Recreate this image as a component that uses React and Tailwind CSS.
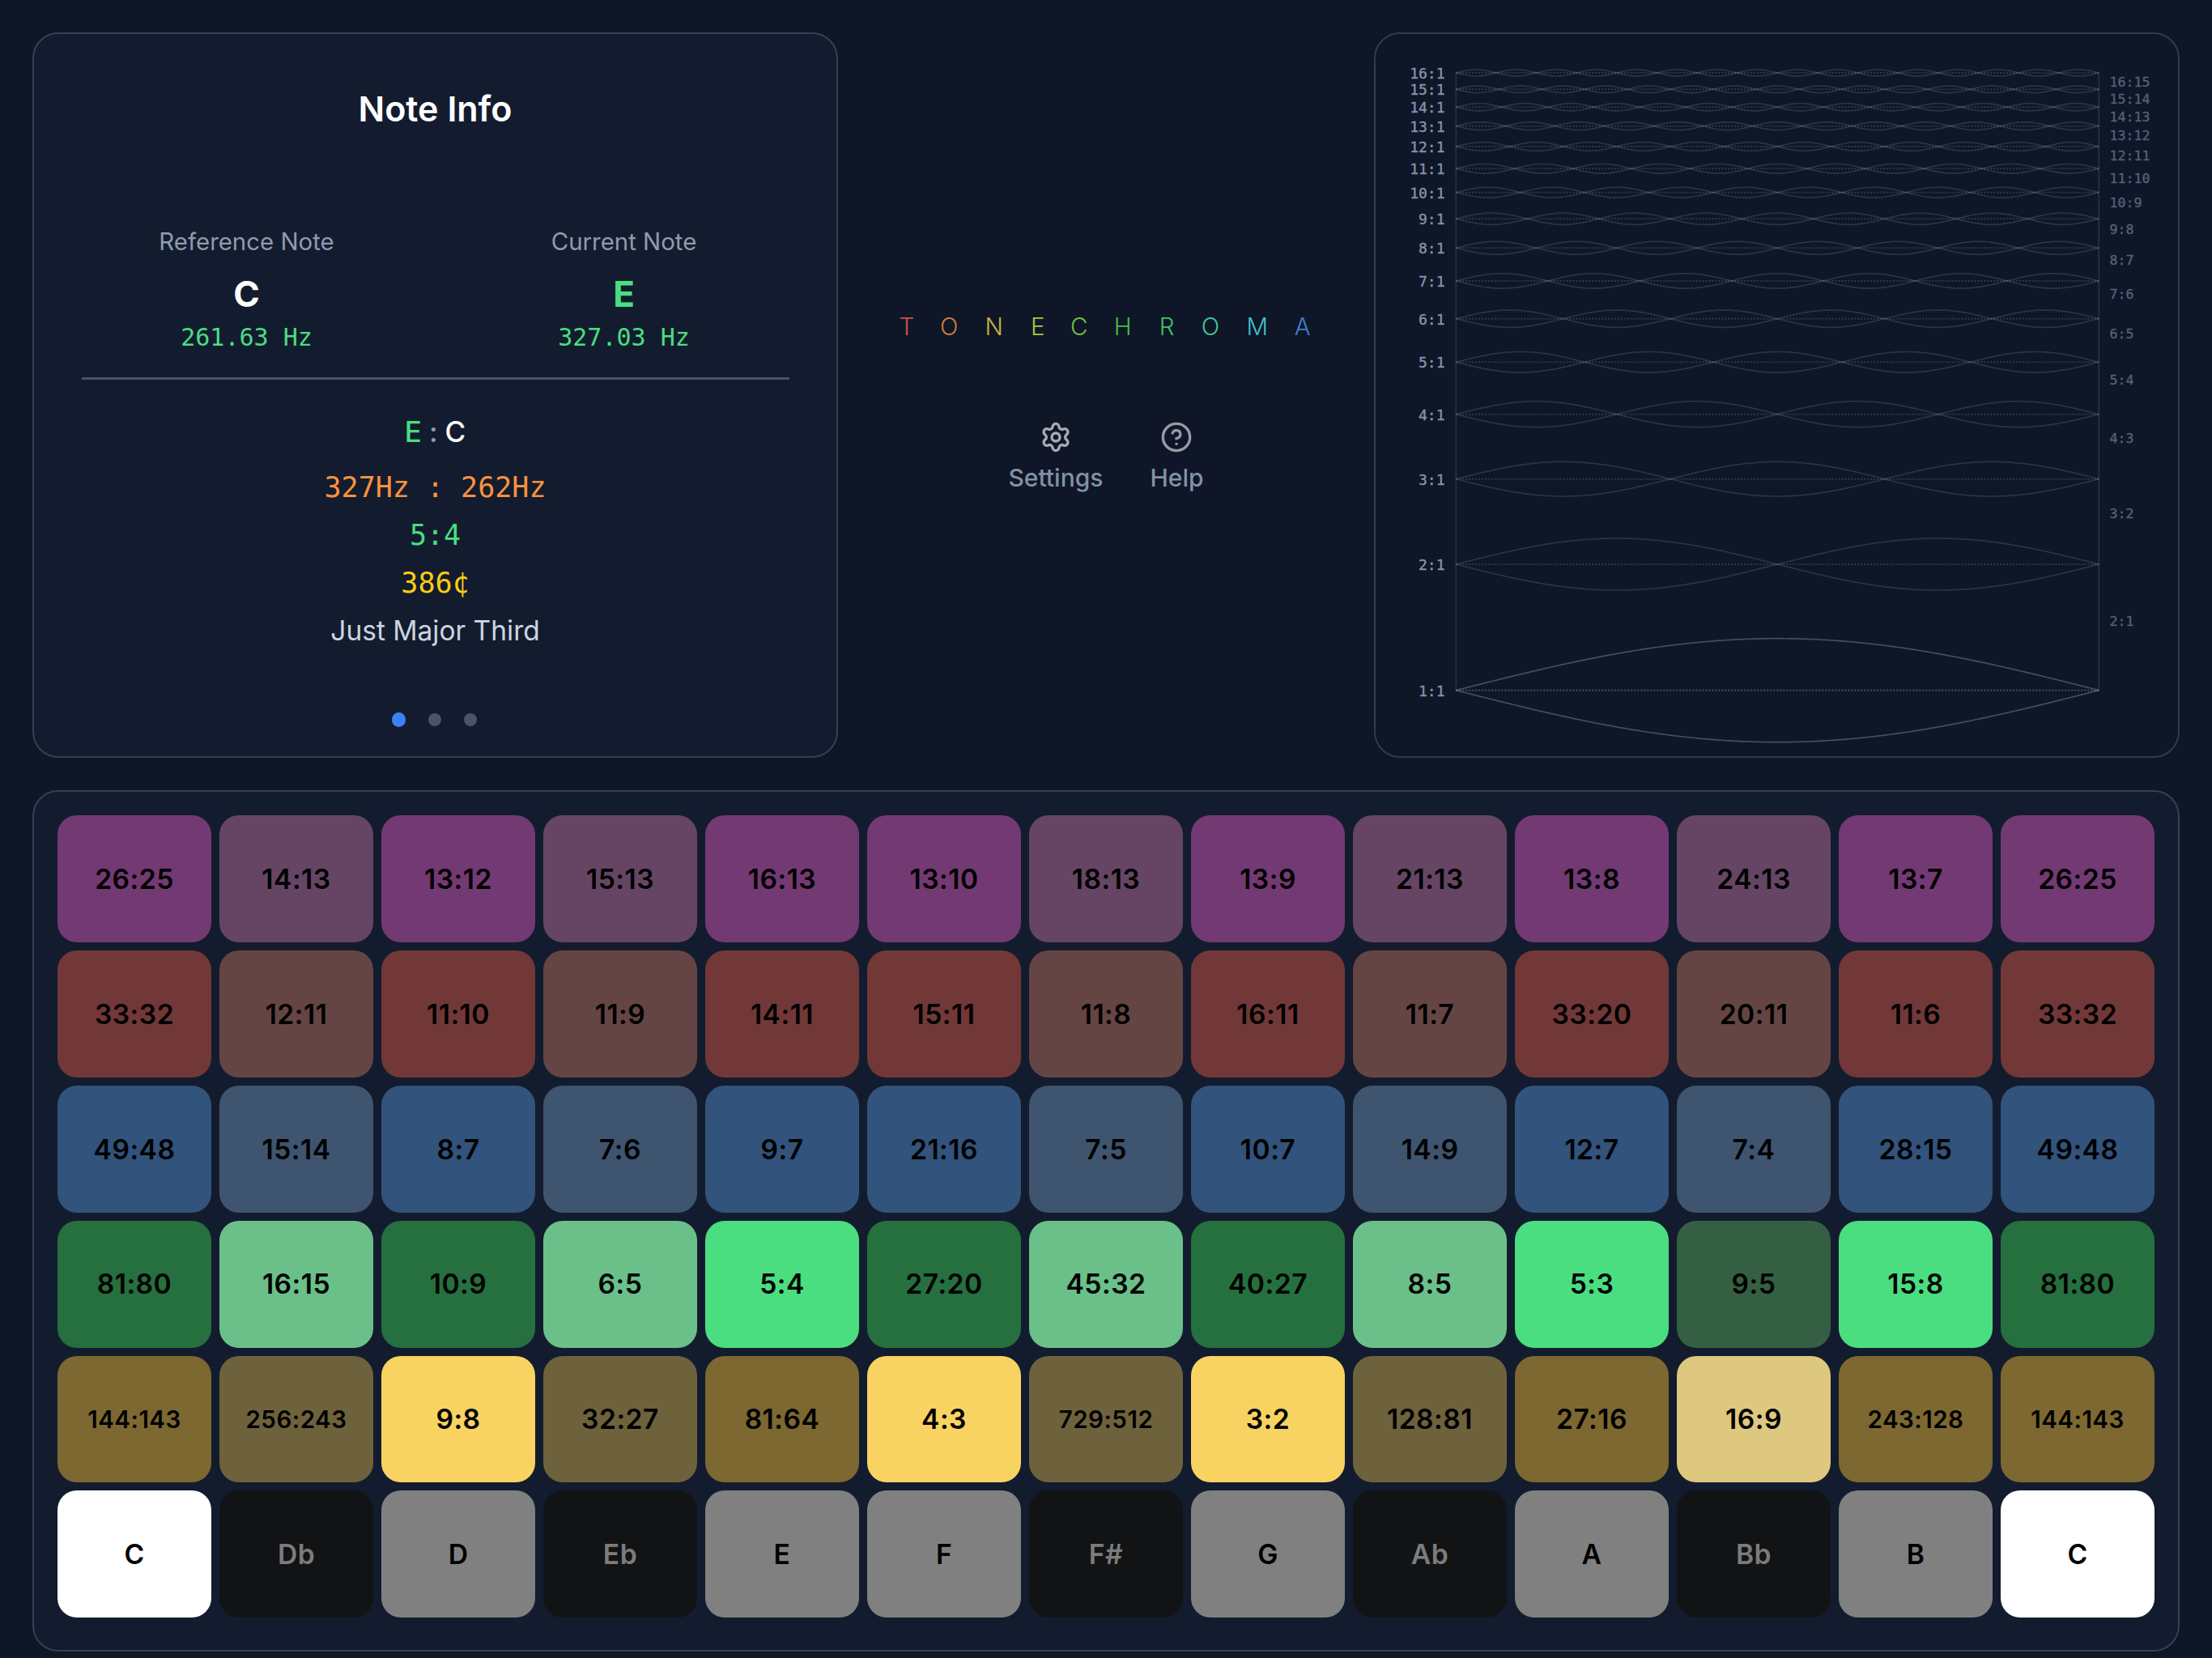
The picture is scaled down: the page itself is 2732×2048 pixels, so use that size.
import clsx from 'clsx'
import { CircleHelp, Settings } from 'lucide-react'

const LOGO = [
  ['T', 'w-[52px] text-[#cf5149]'],
  ['O', 'w-[52.8px] text-[#d07a42]'],
  ['N', 'w-[58.2px] text-[#d0b040]'],
  ['E', 'w-[49.8px] text-[#a9c63f]'],
  ['C', 'w-[52px] text-[#6cc23f]'],
  ['H', 'w-[55.8px] text-[#45bf45]'],
  ['R', 'w-[53px] text-[#43c463]'],
  ['O', 'w-[54.8px] text-[#43c495]'],
  ['M', 'w-[60.8px] text-[#44bfc8]'],
  ['A', 'w-[51px] text-[#437fcb]'],
]

// n: harmonic number, y: string position in the chart
const HARMONICS = [
  [1, 852.7], [2, 697], [3, 591.7], [4, 511.7], [5, 447.3], [6, 393.7], [7, 347], [8, 306.3],
  [9, 270.3], [10, 237.7], [11, 208.3], [12, 181], [13, 155.7], [14, 132.3], [15, 110.3], [16, 90],
]

const INTERVALS = [
  ['2:1', 773], ['3:2', 640.3], ['4:3', 546.7], ['5:4', 475.3], ['6:5', 417.7], ['7:6', 369],
  ['8:7', 326.7], ['9:8', 289.3], ['10:9', 255.7], ['11:10', 226], ['12:11', 198], ['13:12', 173],
  ['14:13', 149.7], ['15:14', 128.3], ['16:15', 107.3],
]

const BLACK_KEYS = [1, 3, 6, 8, 10]

const ROWS = [
  {
    notes: ['26:25', '14:13', '13:12', '15:13', '16:13', '13:10', '18:13', '13:9', '21:13', '13:8', '24:13', '13:7', '26:25'],
    active: [],
    white: 'bg-[#733973]', black: 'bg-[#664564]',
  },
  {
    notes: ['33:32', '12:11', '11:10', '11:9', '14:11', '15:11', '11:8', '16:11', '11:7', '33:20', '20:11', '11:6', '33:32'],
    active: [],
    white: 'bg-[#713837]', black: 'bg-[#654543]',
  },
  {
    notes: ['49:48', '15:14', '8:7', '7:6', '9:7', '21:16', '7:5', '10:7', '14:9', '12:7', '7:4', '28:15', '49:48'],
    active: [],
    white: 'bg-[#31537c]', black: 'bg-[#3f546e]',
  },
  {
    notes: ['81:80', '16:15', '10:9', '6:5', '5:4', '27:20', '45:32', '40:27', '8:5', '5:3', '9:5', '15:8', '81:80'],
    active: [1, 3, 4, 6, 8, 9, 11],
    white: 'bg-[#25703e]', black: 'bg-[#355f42]',
    whiteActive: 'bg-[#4ade80]', blackActive: 'bg-[#6bc08a]',
  },
  {
    notes: ['144:143', '256:243', '9:8', '32:27', '81:64', '4:3', '729:512', '3:2', '128:81', '27:16', '16:9', '243:128', '144:143'],
    active: [2, 5, 7, 10],
    white: 'bg-[#7c6830]', black: 'bg-[#6e623c]',
    whiteActive: 'bg-[#f8d362]', blackActive: 'bg-[#dec77e]',
  },
  {
    notes: ['C', 'Db', 'D', 'Eb', 'E', 'F', 'F#', 'G', 'Ab', 'A', 'Bb', 'B', 'C'],
    active: [0, 12],
    white: 'bg-[#808080]', black: 'bg-[#121315] text-[#7c7c7c]',
    whiteActive: 'bg-white',
  },
]

function cellColor(row, i) {
  const isBlack = BLACK_KEYS.includes(i)
  if (row.active.includes(i)) return isBlack ? row.blackActive : row.whiteActive
  return isBlack ? row.black : row.white
}

function NoteColumn({ label, note, freq, color }) {
  return (
    <div className="flex flex-col items-center">
      <span className="text-[29.4px] leading-10 text-[#8e9bb0]">{label}</span>
      <span className={clsx('mt-4 text-[44px] leading-[56px] font-bold', color)}>{note}</span>
      <span className="mt-1.5 font-['DejaVu_Sans_Mono',monospace] text-[30px] leading-10 text-[#4ade80]">{freq}</span>
    </div>
  )
}

function NoteInfo() {
  return (
    <section className="flex flex-col items-center rounded-[32px] border-2 border-[#334155] bg-[#131c2e] pt-[66px]">
      <h2 className="text-[43px] leading-[52px] font-semibold text-white">Note Info</h2>
      <div className="mt-[119px] grid w-[874px] grid-cols-2 gap-[58px] border-b-[3px] border-[#465467] pb-[29px]">
        <NoteColumn label="Reference Note" note="C" freq="261.63 Hz" color="text-white" />
        <NoteColumn label="Current Note" note="E" freq="327.03 Hz" color="text-[#4ade80]" />
      </div>
      <div className="mt-10 flex flex-col items-center gap-[11px] text-[35px] leading-[48px]">
        <div className="mb-2.5 flex gap-[9px] font-medium">
          <span className="text-[#4ade80]">E</span>
          <span className="text-[#8e9bb0]">:</span>
          <span className="text-white">C</span>
        </div>
        <p className="font-['DejaVu_Sans_Mono',monospace] text-[#fb923c]">327Hz : 262Hz</p>
        <p className="font-['DejaVu_Sans_Mono',monospace] text-[#4ade80]">5:4</p>
        <p className="font-['DejaVu_Sans_Mono',monospace] text-[#facc15]">386¢</p>
        <p className="text-[33.5px] text-[#cbd5e1]">Just Major Third</p>
      </div>
      <div className="mt-[77px] flex items-center gap-7 pr-0.5">
        <span className="size-[17.6px] rounded-full bg-[#3b82f6]" />
        <span className="size-4 rounded-full bg-[#475569]" />
        <span className="size-4 rounded-full bg-[#475569]" />
      </div>
    </section>
  )
}

function Menu() {
  return (
    <section className="flex flex-col items-center pt-[343px]">
      <h1 className="flex pr-1 text-center text-[29.5px] leading-10 font-[350]">
        {LOGO.map(([letter, cls], i) => <span key={i} className={cls}>{letter}</span>)}
      </h1>
      <div className="mt-[97px] flex gap-[58px] text-[30px] leading-9 font-medium text-[#8391a6]">
        <button className="flex flex-col items-center gap-3">
          <Settings size={40} className="text-[#a9abb1]" />
          Settings
        </button>
        <button className="flex flex-col items-center gap-3">
          <CircleHelp size={40} className="text-[#989ba3]" />
          Help
        </button>
      </div>
    </section>
  )
}

const LEFT = 1798.3
const WIDTH = 794

function wave(n, y, sign) {
  const steps = 480
  let d = ''
  for (let i = 0; i <= steps; i++) {
    const x = LEFT + (WIDTH * i) / steps
    const dy = sign * (64 / n) * Math.sin((Math.PI * n * i) / steps)
    d += `${i ? 'L' : 'M'}${x.toFixed(2)} ${(y - dy).toFixed(2)}`
  }
  return d
}

function HarmonicChart() {
  return (
    <section className="rounded-[32px] border-2 border-[#2e3b50]">
      <svg viewBox="1699 42 991 892" className="block h-[892px] w-[991px] font-['DejaVu_Sans_Mono',monospace]" fill="none">
        <path d={`M${LEFT} 90V852.7M${LEFT + WIDTH} 90V852.7`} stroke="#232e41" strokeWidth="2" />
        {HARMONICS.map(([n, y]) => (
          <g key={n} stroke="#94a3b8" strokeOpacity={n === 1 ? 0.4 : 0.21} strokeWidth="1.7">
            <path d={wave(n, y, 1)} />
            <path d={wave(n, y, -1)} />
            <path d={`M${LEFT} ${y}H${LEFT + WIDTH}`} strokeOpacity={n === 1 ? 0.42 : 0.25} strokeWidth="2" strokeDasharray="2 2" />
            <text x="1784.5" y={y + 6.8} textAnchor="end" fontSize="18" fill="#8592a8" stroke="#8592a8" strokeOpacity="1" strokeWidth="0.4">{n}:1</text>
          </g>
        ))}
        {INTERVALS.map(([label, y]) => (
          <text key={label} x="2605.5" y={y} fontSize="16.6" fill="#536178" stroke="#536178" strokeWidth="0.4">{label}</text>
        ))}
      </svg>
    </section>
  )
}

function Keyboard() {
  return (
    <section className="flex h-[1064px] flex-col gap-2.5 rounded-[32px] border-2 border-[#334155] bg-[#131c2e] px-[29px] pt-[29px]">
      {ROWS.map((row, r) => (
        <div key={r} className="grid h-[156.9px] grid-cols-13 gap-2.5">
          {row.notes.map((note, i) => (
            <button
              key={i}
              className={clsx(
                'flex items-center justify-center rounded-3xl pt-px font-semibold tracking-[0.5px]',
                note.length > 6 ? 'text-[29.5px]' : 'text-[33.6px]',
                cellColor(row, i),
              )}
            >
              {note}
            </button>
          ))}
        </div>
      ))}
    </section>
  )
}

export default function App() {
  return (
    <main className="flex h-[2048px] w-[2732px] flex-col gap-10 overflow-hidden bg-[#0e1628] px-10 pt-10 font-['Inter',sans-serif] text-black">
      <div className="grid h-[896px] grid-cols-[995px_1fr_995px] gap-10">
        <NoteInfo />
        <Menu />
        <HarmonicChart />
      </div>
      <Keyboard />
    </main>
  )
}
